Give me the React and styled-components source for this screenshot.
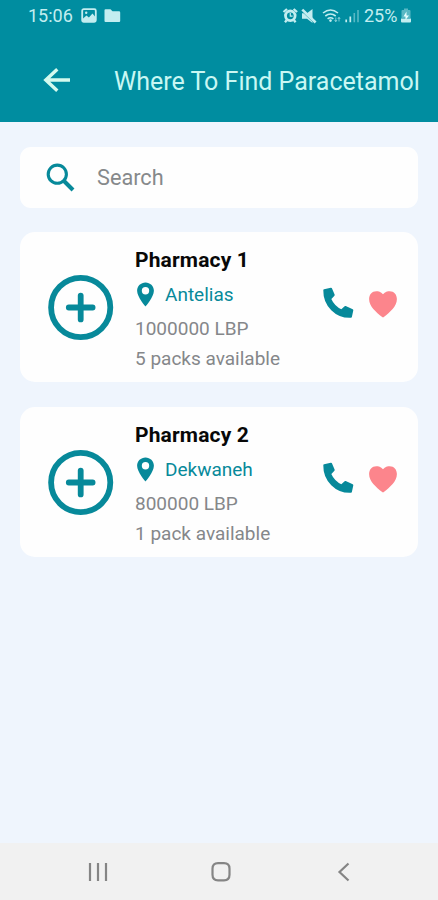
import React from "react";
import styled, { createGlobalStyle } from "styled-components";

const teal = "#008da0";

const GlobalStyle = createGlobalStyle`
  body { margin: 0; background: #eff5fd; font-family: Roboto, "Noto Sans", sans-serif; }
  * { box-sizing: border-box; }
  svg { display: block; flex: none; }
`;

const Screen = styled.div`
  width: 438px;
  height: 900px;
  display: flex;
  flex-direction: column;
  background: #eff5fd;
  overflow: hidden;
`;

const Header = styled.header`
  height: 122px;
  background: ${teal};
`;

const StatusBar = styled.div`
  height: 32px;
  padding: 0 26px 0 28px;
  display: flex;
  align-items: center;
  justify-content: space-between;
  color: #c3edf0;
`;

const StatusGroup = styled.div`
  display: flex;
  align-items: center;
`;

const StatusText = styled.span`
  font-size: 18px;
  line-height: 32px;
  width: ${(p) => p.$width}px;
  white-space: nowrap;
`;

const TitleBar = styled.div`
  height: 90px;
  padding-left: 42px;
  display: flex;
  align-items: flex-start;
`;

const BackButton = styled.button`
  width: 72px;
  height: 62px;
  margin-top: 18px;
  padding: 0;
  border: 0;
  background: none;
`;

const Title = styled.h1`
  margin: 0;
  padding-top: 34px;
  font-size: 25px;
  line-height: 32px;
  font-weight: 400;
  color: #c9f7f3;
  white-space: nowrap;
`;

const Content = styled.main`
  flex: 1;
  padding: 25px 20px 0;
  display: flex;
  flex-direction: column;
`;

const SearchBox = styled.div`
  height: 61px;
  margin-bottom: 24px;
  padding-left: 26px;
  display: flex;
  align-items: center;
  border-radius: 11px;
  background: #fefefe;
  color: #07899a;
`;

const SearchLabel = styled.span`
  margin-left: 21px;
  font-size: 21.7px;
  color: #86898b;
`;

const CardList = styled.div`
  display: grid;
  gap: 25px;
`;

const Card = styled.article`
  height: 150px;
  padding: 0 20px 0 28px;
  display: flex;
  border-radius: 15px;
  background: #fefefe;
`;

const PlusSlot = styled.div`
  width: 87px;
  padding-top: 42px;
`;

const Details = styled.div`
  width: 188px;
  padding-top: 13px;
  white-space: nowrap;
`;

const Name = styled.h2`
  margin: 0 0 4px;
  font-size: 21px;
  line-height: 30px;
  font-weight: 700;
  letter-spacing: 0.15px;
  color: #080808;
`;

const Place = styled.div`
  height: 31px;
  margin: 0 0 4px 2px;
  display: flex;
  align-items: center;
  color: #07899a;
`;

const PlaceName = styled.span`
  margin-left: 11px;
  font-size: 19px;
  line-height: 31px;
`;

const Info = styled.div`
  font-size: 19px;
  line-height: 30px;
  color: #85878a;
`;

const Actions = styled.div`
  display: flex;
  align-items: flex-start;
  gap: 15px;
  padding-top: 55px;
  color: #07899a;
`;

const HeartSlot = styled.div`
  padding-top: 4px;
`;

const NavBar = styled.nav`
  height: 57px;
  padding: 0 83.5px 0 87px;
  display: flex;
  align-items: center;
  justify-content: space-between;
  background: #f1f1f1;
`;

function BackArrow() {
  return (
    <svg width="30" height="30" viewBox="0 0 30 30" fill="none" stroke="#d4faee" strokeWidth="3.4">
      <path d="M28 14H4M15.3 3.2L3.8 14L15.3 24.8" />
    </svg>
  );
}

function LeftStatusIcons() {
  return (
    <svg width="40" height="16" viewBox="0 0 40 16">
      <rect x="1.2" y="1.2" width="13.6" height="12.6" rx="1.5" fill="none" stroke="currentColor" strokeWidth="1.8" />
      <path d="M2 10.500l3.5-3 2.4 2 3.6-4L14 8.500v5H2z" fill="currentColor" />
      <circle cx="5.2" cy="4.8" r="1.2" fill="currentColor" />
      <path d="M23.500 2.200q0-1 1-1h5l2 2H38q1.200 0 1.200 1.200V13q0 1-1 1H24.500q-1 0-1-1z" fill="currentColor" />
    </svg>
  );
}

function RightStatusIcons() {
  return (
    <svg width="82" height="18" viewBox="0 0 82 18" fill="none" stroke="currentColor">
      <circle cx="8.300" cy="8.800" r="4.800" strokeWidth="2.800" />
      <path d="M1.500 5l3.500-3M15.100 5l-3.500-3M4.600 13.300l-1.600 2M12 13.300l1.600 2" strokeWidth="2.300" />
      <path d="M8.300 6v3.200h2.300" strokeWidth="1.200" />
      <path d="M20 6.300h5L30.500 2v14L25 11.700H20z" fill="currentColor" stroke="none" />
      <path d="M20 4.300L32.300 16.300" stroke={teal} strokeWidth="0.700" />
      <path d="M20.300 2.600L33.600 15.500" strokeWidth="2.600" />
      <path d="M41 6q7.500-6 15 0M43.300 9q5.200-4 10.400 0M45.600 11.800q2.900-2.200 5.800 0" strokeWidth="1.600" />
      <circle cx="48.500" cy="13.600" r="1.300" fill="currentColor" stroke="none" />
      <path d="M53.800 10.500v4M57 10.500v4M52.600 13l1.200 1.700 1.200-1.700M55.800 12l1.200-1.700 1.200 1.700" strokeWidth="0.900" opacity="0.700" />
      <path d="M64.200 12.500v2.800M68.300 9.500v5.800" strokeWidth="1.700" />
      <path d="M72.300 6v9.300M76 3v12.300" strokeWidth="1.600" opacity="0.450" />
    </svg>
  );
}

function BatteryIcon() {
  return (
    <svg width="12" height="16" viewBox="0 0 12 16">
      <path d="M4 0.500h4v1.500h1.500q1 0 1 1V10h-9V3q0-1 1-1H4z" fill="currentColor" opacity="0.450" />
      <path d="M1 10.500h10v3q0 1-1 1H2q-1 0-1-1z" fill="currentColor" />
      <path d="M6.500 3.500v4H9L5.500 12V8.500H3.500z" fill="#e8ffff" />
    </svg>
  );
}

function SearchIcon() {
  return (
    <svg width="30" height="30" viewBox="0 0 30 30" fill="none" stroke="currentColor">
      <circle cx="11.300" cy="11.200" r="9.100" strokeWidth="3.100" />
      <path d="M17.500 17.500L27 27" strokeWidth="4" />
    </svg>
  );
}

function Pin() {
  return (
    <svg width="17" height="25" viewBox="0 0 17 25">
      <path fillRule="evenodd" fill="currentColor" d="M8.500 0.500C3.900 0.500 0.100 4.100 0.100 8.700C0.100 14.800 8.500 24.500 8.500 24.500S16.900 14.800 16.900 8.700C16.900 4.100 13.100 0.500 8.500 0.500ZM8.500 5.100A3.700 3.700 0 1 1 8.500 12.500A3.700 3.700 0 1 1 8.500 5.100Z" />
    </svg>
  );
}

function PlusCircle() {
  return (
    <svg width="66" height="66" viewBox="0 0 66 66" fill="none" stroke="#07899a" strokeWidth="5.800">
      <circle cx="32.700" cy="33.500" r="29.600" />
      <path d="M20.800 33.500h23.800M32.700 21.600v23.800" strokeLinecap="round" />
    </svg>
  );
}

function Phone() {
  return (
    <svg width="31" height="32" viewBox="0 0 31 32" fill="currentColor" stroke="currentColor" strokeWidth="2" strokeLinejoin="round">
      <path d="M1.300 3.200L8 1.700L10.700 8L7.200 11.800C9.300 16.800 13.300 21 18.400 23.400L22.300 20L29.300 23.200L27.900 29.800C13.200 30.500 1 18.400 1.300 3.200Z" />
    </svg>
  );
}

function Heart() {
  return (
    <svg width="28" height="27" viewBox="0 0 28 27">
      <path d="M14 3.300C16.200 0.700 18.600 0.200 20.700 0.200C25 0.200 27.900 3.500 27.900 8C27.900 15.500 21 21 14.800 26.100Q14 26.700 13.200 26.100C7 21 0.100 15.500 0.100 8C0.100 3.500 3 0.200 7.300 0.200C9.400 0.200 11.800 0.700 14 3.300Z" fill="#fc858c" />
    </svg>
  );
}

function NavIcon({ d }) {
  return (
    <svg width="22" height="22" viewBox="0 0 22 22" fill="none" stroke="#858585" strokeWidth="2.200">
      <path d={d} />
    </svg>
  );
}

const pharmacies = [
  { name: "Pharmacy 1", place: "Antelias", price: "1000000 LBP", stock: "5 packs available" },
  { name: "Pharmacy 2", place: "Dekwaneh", price: "800000 LBP", stock: "1 pack available" },
];

function PharmacyCard({ name, place, price, stock }) {
  return (
    <Card>
      <PlusSlot><PlusCircle /></PlusSlot>
      <Details>
        <Name>{name}</Name>
        <Place>
          <Pin />
          <PlaceName>{place}</PlaceName>
        </Place>
        <Info>{price}</Info>
        <Info>{stock}</Info>
      </Details>
      <Actions>
        <Phone />
        <HeartSlot><Heart /></HeartSlot>
      </Actions>
    </Card>
  );
}

export default function App() {
  return (
    <Screen>
      <GlobalStyle />
      <Header>
        <StatusBar>
          <StatusGroup>
            <StatusText $width={53}>15:06</StatusText>
            <LeftStatusIcons />
          </StatusGroup>
          <StatusGroup>
            <RightStatusIcons />
            <StatusText $width={36}>25%</StatusText>
            <BatteryIcon />
          </StatusGroup>
        </StatusBar>
        <TitleBar>
          <BackButton aria-label="Back"><BackArrow /></BackButton>
          <Title>Where To Find Paracetamol</Title>
        </TitleBar>
      </Header>
      <Content>
        <SearchBox>
          <SearchIcon />
          <SearchLabel>Search</SearchLabel>
        </SearchBox>
        <CardList>
          {pharmacies.map((p) => <PharmacyCard key={p.name} {...p} />)}
        </CardList>
      </Content>
      <NavBar>
        <NavIcon d="M3 2v18M11 2v18M19 2v18" />
        <NavIcon d="M8 2.200h6q5.500 0 5.500 5.500v6.100q0 5.500-5.500 5.500H8q-5.500 0-5.500-5.500V7.700q0-5.500 5.500-5.500z" />
        <NavIcon d="M15.500 2.500L6.500 11L15.500 19.500" />
      </NavBar>
    </Screen>
  );
}
